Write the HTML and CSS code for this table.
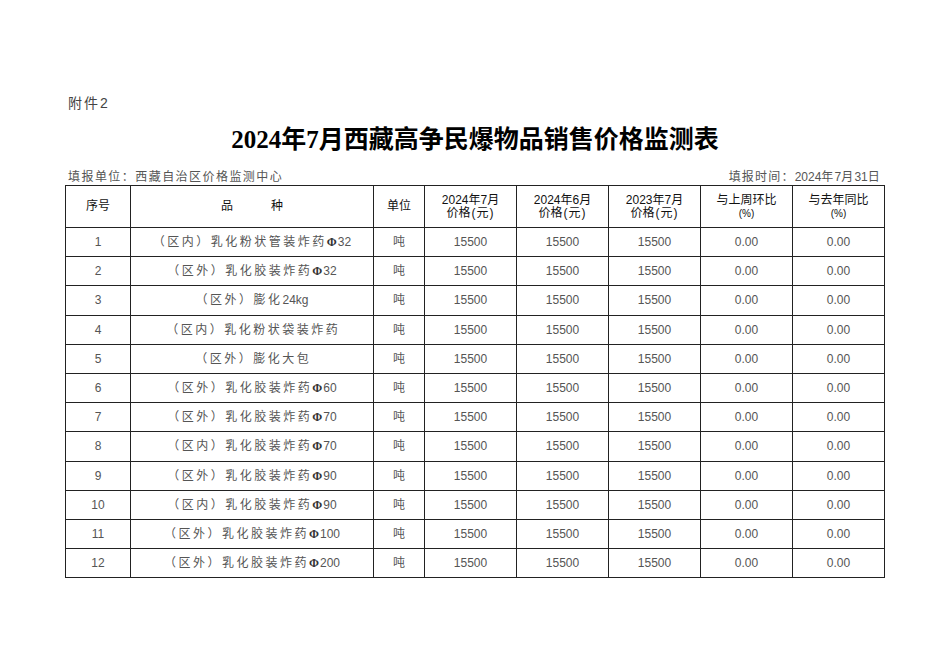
FILE: index.html
```html
<!DOCTYPE html>
<html lang="zh-CN">
<head>
<meta charset="utf-8">
<title>2024年7月西藏高争民爆物品销售价格监测表</title>
<link rel="stylesheet" href="styles.css">
</head>
<body>
<div class="page">
  <div class="annex">附件<span class="num">2</span></div>
  <h1 class="title">2024年7月西藏高争民爆物品销售价格监测表</h1>
  <div class="meta">
    <span class="meta-left">填报单位：西藏自治区价格监测中心</span>
    <span class="meta-right">填报时间：<span class="num">2024</span>年<span class="num">7</span>月<span class="num">31</span>日</span>
  </div>
  <table class="grid">
    <colgroup>
      <col class="c-no"><col class="c-name"><col class="c-unit">
      <col class="c-p"><col class="c-p"><col class="c-p"><col class="c-p"><col class="c-p">
    </colgroup>
    <thead>
      <tr>
        <th>序号</th>
        <th><span class="spread">品</span>种</th>
        <th>单位</th>
        <th>2024年7月<br>价格<span class="paren">(</span>元<span class="paren">)</span></th>
        <th>2024年6月<br>价格<span class="paren">(</span>元<span class="paren">)</span></th>
        <th>2023年7月<br>价格<span class="paren">(</span>元<span class="paren">)</span></th>
        <th>与上周环比<br><span class="pct">(%)</span></th>
        <th>与去年同比<br><span class="pct">(%)</span></th>
      </tr>
    </thead>
    <tbody>
      <tr><td>1</td><td class="name">（区内）乳化粉状管装炸药<span class="phi">Φ</span><span class="num">32</span></td><td>吨</td><td>15500</td><td>15500</td><td>15500</td><td>0.00</td><td>0.00</td></tr>
      <tr><td>2</td><td class="name">（区外）乳化胶装炸药<span class="phi">Φ</span><span class="num">32</span></td><td>吨</td><td>15500</td><td>15500</td><td>15500</td><td>0.00</td><td>0.00</td></tr>
      <tr><td>3</td><td class="name">（区外）膨化<span class="num">24kg</span></td><td>吨</td><td>15500</td><td>15500</td><td>15500</td><td>0.00</td><td>0.00</td></tr>
      <tr><td>4</td><td class="name">（区内）乳化粉状袋装炸<span class="last">药</span></td><td>吨</td><td>15500</td><td>15500</td><td>15500</td><td>0.00</td><td>0.00</td></tr>
      <tr><td>5</td><td class="name">（区外）膨化大<span class="last">包</span></td><td>吨</td><td>15500</td><td>15500</td><td>15500</td><td>0.00</td><td>0.00</td></tr>
      <tr><td>6</td><td class="name">（区外）乳化胶装炸药<span class="phi">Φ</span><span class="num">60</span></td><td>吨</td><td>15500</td><td>15500</td><td>15500</td><td>0.00</td><td>0.00</td></tr>
      <tr><td>7</td><td class="name">（区外）乳化胶装炸药<span class="phi">Φ</span><span class="num">70</span></td><td>吨</td><td>15500</td><td>15500</td><td>15500</td><td>0.00</td><td>0.00</td></tr>
      <tr><td>8</td><td class="name">（区内）乳化胶装炸药<span class="phi">Φ</span><span class="num">70</span></td><td>吨</td><td>15500</td><td>15500</td><td>15500</td><td>0.00</td><td>0.00</td></tr>
      <tr><td>9</td><td class="name">（区外）乳化胶装炸药<span class="phi">Φ</span><span class="num">90</span></td><td>吨</td><td>15500</td><td>15500</td><td>15500</td><td>0.00</td><td>0.00</td></tr>
      <tr><td>10</td><td class="name">（区内）乳化胶装炸药<span class="phi">Φ</span><span class="num">90</span></td><td>吨</td><td>15500</td><td>15500</td><td>15500</td><td>0.00</td><td>0.00</td></tr>
      <tr><td>11</td><td class="name">（区外）乳化胶装炸药<span class="phi">Φ</span><span class="num">100</span></td><td>吨</td><td>15500</td><td>15500</td><td>15500</td><td>0.00</td><td>0.00</td></tr>
      <tr><td>12</td><td class="name">（区外）乳化胶装炸药<span class="phi">Φ</span><span class="num">200</span></td><td>吨</td><td>15500</td><td>15500</td><td>15500</td><td>0.00</td><td>0.00</td></tr>
    </tbody>
  </table>
</div>
</body>
</html>
```

FILE: styles.css
```css
html, body {
  margin: 0;
  padding: 0;
  background: #ffffff;
}

body {
  font-family: "Liberation Sans", "Noto Sans CJK SC", sans-serif;
  color: #333333;
}

.page {
  width: 820px;
  padding: 93px 0 0 65px;
}

.annex {
  font-size: 14px;
  line-height: 20px;
  color: #444444;
  padding-left: 3px;
  letter-spacing: 2px;
}

.annex .num {
  letter-spacing: 0;
}

.title {
  margin: 12px 0 0 0;
  font-family: "Liberation Serif", "Noto Sans CJK SC", serif;
  font-weight: 700;
  font-size: 25px;
  line-height: 30px;
  text-align: center;
  color: #000000;
}

.meta {
  display: flex;
  justify-content: space-between;
  margin-top: 15px;
  font-size: 12px;
  line-height: 14px;
  color: #555555;
  padding: 0 4px 0 3px;
}

.meta-left {
  letter-spacing: 1.45px;
}

.meta-right {
  letter-spacing: 1.2px;
}

.meta-right .num {
  letter-spacing: 0;
}

.grid {
  margin-top: 1px;
  width: 820px;
  border-collapse: collapse;
  table-layout: fixed;
  border: 1.5px solid #222222;
}

.c-no { width: 65px; }
.c-name { width: 243px; }
.c-unit { width: 51px; }
.c-p { width: 92px; }

.grid th,
.grid td {
  border: 1px solid #222222;
  padding: 0;
  text-align: center;
  vertical-align: middle;
}

.grid th {
  height: 41px;
  font-weight: 400;
  font-size: 12px;
  line-height: 13px;
  color: #111111;
}

.spread {
  margin-right: 38px;
}

.paren {
  margin: 0 1px;
}

.pct {
  font-size: 10px;
}

.grid td {
  height: 28.2px;
  font-size: 12px;
  line-height: 14px;
  color: #555555;
}

.grid td.name {
  letter-spacing: 2.5px;
}

.grid td .num {
  letter-spacing: 0;
}

.grid td .last {
  letter-spacing: 0;
}

.phi {
  font-family: "Liberation Serif", serif;
  font-weight: 700;
  letter-spacing: 0;
  margin-right: 1px;
  color: #333333;
}
```
